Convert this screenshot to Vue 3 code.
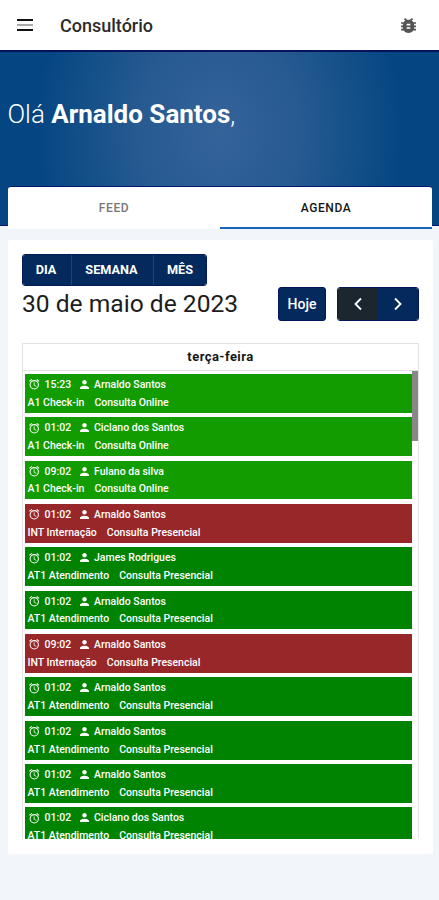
<script setup>
const views = ['DIA', 'SEMANA', 'MÊS']
const names = ['Arnaldo Santos', 'Ciclano dos Santos', 'Fulano da silva', 'James Rodrigues']
const online = (time, name) => ({ time, name, status: 'A1 Check-in', type: 'Consulta Online', tone: 'checkin' })
const ward = (time, name) => ({ time, name, status: 'INT Internação', type: 'Consulta Presencial', tone: 'ward' })
const visit = (time, name) => ({ time, name, status: 'AT1 Atendimento', type: 'Consulta Presencial', tone: 'visit' })
const events = [
  online('15:23', names[0]),
  online('01:02', names[1]),
  online('09:02', names[2]),
  ward('01:02', names[0]),
  visit('01:02', names[3]),
  visit('01:02', names[0]),
  ward('09:02', names[0]),
  visit('01:02', names[0]),
  visit('01:02', names[0]),
  visit('01:02', names[0]),
  visit('01:02', names[1])
]
</script>

<template>
  <div class="screen">
    <header class="topbar">
      <svg class="menu" viewBox="0 0 16 12"><path d="M0 1h16M0 11h16" /><path class="mid" d="M0 6h16" /></svg>
      <h1>Consultório</h1>
      <svg class="bug" viewBox="4 3 16 18" preserveAspectRatio="none"><path d="M20 8h-2.81c-.45-.78-1.07-1.45-1.82-1.96L17 4.41 15.59 3l-2.17 2.17C12.96 5.06 12.49 5 12 5s-.96.06-1.41.17L8.41 3 7 4.41l1.62 1.63C7.88 6.55 7.26 7.22 6.81 8H4v2h2.09c-.05.33-.09.66-.09 1v1H4v2h2v1c0 .34.04.67.09 1H4v2h2.81c1.04 1.79 2.97 3 5.19 3s4.15-1.21 5.19-3H20v-2h-2.09c.05-.33.09-.66.09-1v-1h2v-2h-2v-1c0-.34-.04-.67-.09-1H20V8zm-6 8h-4v-2h4v2zm0-4h-4v-2h4v2z" /></svg>
    </header>
    <section class="hero">
      <p>Olá <strong>Arnaldo Santos</strong>,</p>
    </section>
    <nav class="tabs">
      <div class="tab">FEED</div>
      <div class="tab active">AGENDA</div>
    </nav>
    <main class="card">
      <div class="views">
        <button v-for="v in views" :key="v">{{ v }}</button>
      </div>
      <div class="toolbar">
        <h2>30 de maio de 2023</h2>
        <button class="today">Hoje</button>
        <div class="pager">
          <button class="prev"><svg viewBox="0 0 10 14"><path d="M8 1.500 2.500 7 8 12.500" /></svg></button>
          <button class="next"><svg viewBox="0 0 10 14"><path d="M2 1.500 7.500 7 2 12.500" /></svg></button>
        </div>
      </div>
      <div class="calendar">
        <div class="weekday">terça-feira</div>
        <div class="list">
          <div class="events">
            <article v-for="(e, i) in events" :key="i" :class="['event', e.tone]">
              <div class="line first">
                <svg class="alarm" viewBox="0 0 24 24"><path d="M22 5.720l-4.600-3.860-1.290 1.530 4.600 3.860L22 5.720zM7.880 3.390 6.600 1.860 2 5.710l1.290 1.530 4.590-3.850zM12.500 8H11v6l4.750 2.850.75-1.230-4-2.370V8zM12 4a9 9 0 1 0 0 18 9 9 0 0 0 0-18zm0 16a7 7 0 1 1 0-14 7 7 0 0 1 0 14z" /></svg>
                <span class="time">{{ e.time }}</span>
                <svg class="person" viewBox="4 4 16 16"><path d="M12 12c2.210 0 4-1.790 4-4s-1.790-4-4-4-4 1.790-4 4 1.790 4 4 4zm0 2c-2.670 0-8 1.340-8 4v2h16v-2c0-2.660-5.330-4-8-4z" /></svg>
                <span>{{ e.name }}</span>
              </div>
              <div class="line second">
                <span>{{ e.status }}</span>
                <span>{{ e.type }}</span>
              </div>
            </article>
          </div>
          <div class="track"><div class="thumb"></div></div>
        </div>
      </div>
    </main>
  </div>
</template>

<style>
body {
  background: #f2f6fa;
}
</style>

<style scoped>
* {
  box-sizing: border-box;
}
.screen {
  width: 439px;
  height: 900px;
  overflow: hidden;
  background: #f2f6fa;
  font-family: Roboto, "Liberation Sans", sans-serif;
}
h1, h2, p {
  margin: 0;
}
.topbar {
  height: 50px;
  background: #fff;
  display: flex;
  align-items: center;
  padding: 0 23px 0 17px;
}
.menu {
  width: 16px;
  height: 12px;
  fill: none;
  stroke: #111;
  stroke-width: 2;
}
.menu .mid {
  stroke: #aaa;
}
h1 {
  flex: 1;
  margin-left: 27px;
  font-size: 18px;
  font-weight: 500;
  color: #2b2b2b;
}
.bug {
  width: 15px;
  height: 15px;
  fill: #555;
}
.hero {
  height: 176px;
  padding: 45px 8px 0 7.500px;
  border-top: 2px solid #03125c;
  border-bottom: 1px solid #03176e;
  background: radial-gradient(ellipse 182px 240px at 50% 46%, #34639a, #265a91 45%, #054682);
  color: #fff;
  font-size: 26px;
  line-height: 34px;
  font-weight: 300;
}
.hero strong {
  font-weight: 700;
}
.tabs {
  display: flex;
  position: relative;
  height: 43px;
  margin: -40px 7px 0 8px;
  background: #fff;
  border-radius: 3px 3px 0 0;
  border-top: 1px solid #03176e;
}
.tab {
  flex: 1;
  display: flex;
  align-items: center;
  justify-content: center;
  font-size: 12px;
  font-weight: 500;
  letter-spacing: 0.6px;
  color: #777;
}
.tab.active {
  color: #151515;
  border-bottom: 2px solid #1763bd;
  border-top: 2px solid transparent;
}
.tab:first-child {
  padding-bottom: 1px;
}
.card {
  margin: 11px 6px 0 8px;
  height: 614px;
  padding: 14px 14px 0 14px;
  background: #fff;
  border-radius: 3px;
}
button {
  border: 0;
  padding: 0;
  font: inherit;
  color: #fff;
  background: #03295d;
  display: flex;
  align-items: center;
  justify-content: center;
}
.views {
  display: flex;
  width: 185px;
  height: 32px;
  border: 1px solid #031957;
  border-radius: 3px;
  overflow: hidden;
  font-size: 12.700px;
  font-weight: 700;
}
.views button {
  padding-bottom: 1px;
}
.views button:nth-child(1) { width: 48px; padding-right: 2px; }
.views button:nth-child(2) { width: 82px; padding-right: 2px; border-left: 1px solid #234575; }
.views button:nth-child(3) { flex: 1; border-left: 1px solid #234575; }
.toolbar {
  display: flex;
  height: 36px;
  align-items: center;
}
h2 {
  flex: 1;
  font-size: 24.600px;
  font-weight: 400;
  line-height: 36px;
  color: #1c1c1c;
  white-space: nowrap;
}
.today {
  width: 48px;
  height: 34px;
  border: 1px solid #03155b;
  border-radius: 3px;
  font-size: 14px;
  font-weight: 500;
}
.pager {
  display: flex;
  width: 82px;
  height: 34px;
  margin-left: 11px;
  border: 1px solid #03155b;
  border-radius: 3px;
  overflow: hidden;
}
.pager button {
  flex: 1;
}
.pager .prev {
  background: #1b262e;
}
.pager svg {
  width: 10px;
  height: 14px;
  fill: none;
  stroke: #fff;
  stroke-width: 1.8;
}
.calendar {
  margin-top: 21px;
  width: 397px;
  height: 496px;
  border: 1px solid #e2e2e2;
  border-bottom: 0;
}
.weekday {
  height: 27px;
  border-bottom: 1px solid #e2e2e2;
  text-align: center;
  font-size: 13px;
  line-height: 26px;
  font-weight: 700;
  letter-spacing: 0.45px;
  color: #151515;
}
.list {
  display: flex;
  height: 468px;
  overflow: hidden;
}
.events {
  display: flex;
  flex-direction: column;
  gap: 4.600px;
  flex: 1;
  padding: 3px 0 0 2px;
}
.track {
  width: 6px;
}
.thumb {
  height: 70px;
  background: #888;
}
.event {
  flex: none;
  height: 38.750px;
  padding: 1px 3px 0;
  color: #fff;
  font-size: 10.500px;
  font-weight: 500;
}
.checkin { background: #129c00; }
.visit { background: #008300; }
.ward { background: #982729; }
.line {
  display: flex;
  align-items: center;
  height: 18px;
  white-space: nowrap;
}
.first { padding-top: 1px; }
.second {
  gap: 10px;
  margin-left: -0.500px;
  padding-top: 0.500px;
}
.alarm {
  width: 12.500px;
  height: 12.500px;
  fill: #fff;
}
.time {
  width: 30px;
  margin: 0 5px 0 4px;
}
.person {
  width: 9px;
  height: 9px;
  margin-right: 5.500px;
  fill: #fff;
}
</style>
